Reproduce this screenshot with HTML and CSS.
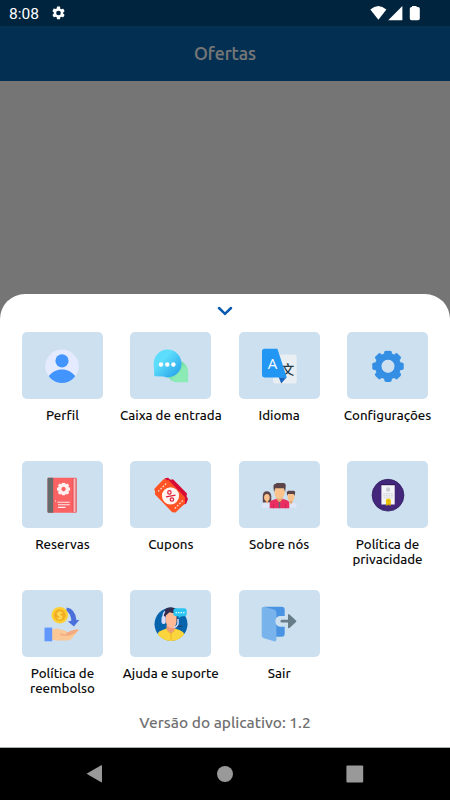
FILE: index.html
```html
<!DOCTYPE html>
<html lang="pt">
<head>
<meta charset="utf-8">
<title>Ofertas</title>
<link rel="stylesheet" href="styles.css">
</head>
<body>
<svg width="0" height="0" class="defs" aria-hidden="true">
  <defs>
    <linearGradient id="chatBlue" x1="0" y1="0" x2="1" y2="1"><stop offset="0.35" stop-color="#5cddfb"/><stop offset="1" stop-color="#1f9ae8"/></linearGradient>
    <linearGradient id="chatGreen" x1="0" y1="0" x2="1" y2="1"><stop offset="0.2" stop-color="#5fcf98"/><stop offset="0.6" stop-color="#8ceab5"/></linearGradient>
    <clipPath id="round"><circle cx="18" cy="18.2" r="16.7"/></clipPath>
    <mask id="hole" maskUnits="userSpaceOnUse" x="-16" y="-16" width="32" height="32"><rect x="-16" y="-16" width="32" height="32" fill="#fff"/><circle r="6.7" fill="#000"/></mask>
    <symbol id="gear8" viewBox="-16 -16 32 32">
      <circle r="9.9" fill="none" stroke="currentColor" stroke-width="6.4"/>
      <g fill="currentColor" mask="url(#hole)">
        <rect x="-3.8" y="-15.7" width="7.6" height="31.4" rx="1.8"/>
        <rect x="-3.8" y="-15.7" width="7.6" height="31.4" rx="1.8" transform="rotate(45)"/>
        <rect x="-3.8" y="-15.7" width="7.6" height="31.4" rx="1.8" transform="rotate(90)"/>
        <rect x="-3.8" y="-15.7" width="7.6" height="31.4" rx="1.8" transform="rotate(135)"/>
      </g>
    </symbol>
  </defs>
</svg>
<div class="screen">
  <div class="status">
    <span class="clock">8:08</span>
    <svg class="status-gear" viewBox="2 2 20 20"><path fill="#fff" d="M19.14 12.94c.04-.3.06-.61.06-.94s-.02-.64-.07-.94l2.03-1.58a.49.49 0 0 0 .12-.61l-1.92-3.32a.49.49 0 0 0-.59-.22l-2.39.96a7 7 0 0 0-1.62-.94l-.36-2.54A.48.48 0 0 0 13.92 2h-3.84a.48.48 0 0 0-.47.41l-.36 2.54c-.59.24-1.13.57-1.62.94l-2.39-.96a.48.48 0 0 0-.59.22L2.74 8.87a.48.48 0 0 0 .12.61l2.03 1.58a7 7 0 0 0 0 1.88l-2.03 1.58a.49.49 0 0 0-.12.61l1.92 3.32c.12.22.37.29.59.22l2.39-.96c.5.38 1.03.7 1.62.94l.36 2.54c.05.24.24.41.48.41h3.84c.24 0 .44-.17.47-.41l.36-2.54a7 7 0 0 0 1.62-.94l2.39.96c.22.08.47 0 .59-.22l1.92-3.32a.48.48 0 0 0-.12-.61zM12 15.6a3.6 3.6 0 1 1 0-7.2 3.6 3.6 0 0 1 0 7.2z"/></svg>
    <svg class="status-right" viewBox="0 0 50 16" fill="#fff"><path d="M.3 4.6Q8.3-2.500 16.400 4.600L8.400 14.800z"/><path d="M32.400.9v14.300H18.200z"/><path d="M42 2V1h4.600v1h1.400q1.800 0 1.800 1.800v9.600q0 1.800-1.800 1.800h-6.400q-1.800 0-1.800-1.800V3.800Q39.800 2 41.600 2z"/></svg>
  </div>
  <header class="appbar"><h1>Ofertas</h1></header>
  <div class="scrim"></div>
  <main class="sheet">
    <svg class="chevron" viewBox="0 0 16 10"><path d="M2 2l6 5.800L14 2" fill="none" stroke="#0759b0" stroke-width="2.500" stroke-linecap="round"/></svg>
    <div class="grid">
      <div class="item"><div class="tile"><svg viewBox="0 0 36 36"><circle cx="18" cy="18.200" r="16.700" fill="#e4eaff"/><g fill="#4294ff" clip-path="url(#round)"><circle cx="18" cy="12.800" r="6.600"/><path d="M4.600 28.300C8 23.700 12.500 21.400 18 21.400S28 23.700 31.300 28.300L27 36H9z"/></g></svg></div><span class="label">Perfil</span></div>

      <div class="item"><div class="tile"><svg viewBox="0 0 36 36"><path d="M24.500 12.800A10.800 10.800 0 0 1 35.200 23.700V34.300H24.500A10.700 10.700 0 0 1 24.500 12.800z" fill="url(#chatGreen)"/><path d="M1.300 28.300L.7 15.500A13.900 13.900 0 1 1 14.600 29.400Q12.500 29.400 10.500 28.500z" fill="url(#chatBlue)"/><g fill="#fff"><circle cx="8" cy="16.500" r="2.200"/><circle cx="14.300" cy="16.500" r="2.200"/><circle cx="20.400" cy="16.500" r="2.200"/></g></svg></div><span class="label">Caixa de entrada</span></div>

      <div class="item"><div class="tile"><svg viewBox="0 0 36 36"><rect x="12" y="6.500" width="23.700" height="29" rx="2.500" fill="#e9eef2"/><text class="han" x="20.200" y="25.700">文</text><path d="M17.700 29.200h8L20.200 35.500z" fill="#1565c0"/><path d="M3.400.8h13L25.800 29.500H3.400Q1 29.500 1 27.100V3.200Q1 .8 3.400.8z" fill="#2196f3"/><text class="latin" x="11.500" y="20.700">A</text></svg></div><span class="label">Idioma</span></div>

      <div class="item"><div class="tile"><svg viewBox="0 0 36 36" class="blue-gear"><use href="#gear8" x="2" y="2.200" width="32" height="32"/></svg></div><span class="label">Configurações</span></div>

      <div class="item"><div class="tile"><svg viewBox="0 0 36 36"><rect x="3.500" y=".8" width="29" height="35" rx="1" fill="#fb6264"/><path d="M4.500.8h4.700v35H4.500q-1 0-1-1V1.800q0-1 1-1z" fill="#656b6b"/><path d="M29.200 1.500h2.500v33.500h-2.500z" fill="#ffb4b4"/><path d="M29 1v34.500M32.200 1v34.500" stroke="#c9444e" stroke-width=".6"/><g class="white-gear"><use href="#gear8" x="12.800" y="5.300" width="13.500" height="13.500"/><circle cx="19.550" cy="12.050" r="2.700" fill="none" stroke="#fff0ef" stroke-width="1"/></g><path d="M13.500 25.200h12.300M14 27.800h11.800M14 30.400h7.500" stroke="#ffe9e9" stroke-width="1.100"/><path d="M11.500 23v2" stroke="#ffc0c0" stroke-width=".8"/></svg></div><span class="label">Reservas</span></div>

      <div class="item"><div class="tile"><svg viewBox="0 0 36 36"><path d="M11.500 1.300L15 .7l2.500 2L20 2.200 34 16.500l-.5 2.500L35 22l-2 5-4 .5z" fill="#d80b35"/><path d="M11 1.800l2.300 1.500 2.200-.2L32.200 20.500l-.4 2.200.5 3.500L22.500 35.400l-3.300-.2L1.800 17.300l.4-2.400-1-3z" fill="#ff5323"/><circle cx="17.500" cy="18.800" r="8.600" fill="#fff4f0"/><path d="M5.200 14.500l8-8M21.800 31.500l8.500-8.500" stroke="#ffd5c6" stroke-width="1.300" stroke-dasharray="1.700 1.500"/><g fill="none" stroke="#df203c" stroke-width="1.200"><path d="M13 19.800l9.500-1.600"/><circle cx="16.400" cy="15.400" r="1.700"/><circle cx="18.900" cy="22.500" r="1.700"/></g></svg></div><span class="label">Cupons</span></div>

      <div class="item"><div class="tile"><svg viewBox="0 0 36 36"><path d="M1.800 24.500V19q0-4.800 4-4.800t4.500 4.800v6.500H2z" fill="#5c4449"/><path d="M.8 30.700v-2q0-2 2.500-2.700l2.500-.8 3 .8 2 4.700zM25 30.700l1.500-4.500 3.700-1 3.500 1q2 .7 2 2.500v2z" fill="#dee5f6"/><path d="M5 21h2.200v4.500l-1.200 1-1-1z" fill="#e9a76e"/><ellipse cx="5.900" cy="20.500" rx="2.800" ry="3.500" fill="#fac28c"/><path d="M28.500 22h3v3.800L30 27l-1.500-1.200z" fill="#e9a76e"/><ellipse cx="30" cy="19.700" rx="3.400" ry="4.300" fill="#fac28c"/><path d="M26.300 19l-.6-4 1.500-1.200h5.600q1.400.2 1.400 1.800l-.7 3.400-1-2h-5.400z" fill="#5c4449"/><path d="M8.700 31.200v-5q0-2.300 2.500-2.900L15.500 21.700h6l4.500 1.600q2.300.7 2.300 2.900v5z" fill="#e92f62"/><path d="M15.500 19h6v3.500l-3 3-3-3z" fill="#e9a76e"/><ellipse cx="18.500" cy="15.300" rx="5.200" ry="6.700" fill="#fac28c"/><path d="M13 15l-.6-6q.4-2.300 2.400-2.300l1-.8h7q2 .2 2 2.300L24.200 15l-1.400-3.800h-8.400z" fill="#5c4449"/><path d="M18.500 25v6.200" stroke="#5b6a78" stroke-width="1.300"/><path d="M12.500 27v4.200M24.500 27v4.200" stroke="#c82052" stroke-width=".7"/></svg></div><span class="label">Sobre nós</span></div>

      <div class="item"><div class="tile"><svg viewBox="0 0 36 36"><circle cx="18" cy="18.200" r="15.900" fill="#44277b" stroke="#2b2060" stroke-width=".8"/><path d="M10.500 7.300h14.800v1.300H10.500z" fill="#281750"/><path d="M11.400 8.200h13.300v19.300H11.400z" fill="#f5f5f8"/><circle cx="18.100" cy="12.500" r="2.200" fill="#c8ccd0"/><path d="M13.300 16.800h9.600M13.300 18.800h9.600" stroke="#bfc4cc" stroke-width=".8" stroke-dasharray="2 .6"/><path d="M13.300 20.800h9.600" stroke="#d0d3da" stroke-width=".7"/><path d="M16.200 24.500h4.500v4.500l-2.200-1.300-2.300 1.300z" fill="#dfa800"/><circle cx="18.400" cy="24" r="2.600" fill="#f4c900"/><circle cx="18.400" cy="24" r="1" fill="#dca600"/></svg></div><span class="label">Política de<br>privacidade</span></div>

      <div class="item"><div class="tile"><svg viewBox="0 0 36 36"><path d="M22.800 1.500Q31.500 3 32.500 14.300l3-.5-5.600 6.700-5.900-5 3.300-.7Q27 8 22.200 4.500z" fill="#4b70dc"/><circle cx="15.800" cy="9.200" r="8.300" fill="#fdd034"/><circle cx="15.800" cy="9.200" r="5.900" fill="#f3ad22"/><text class="coin" x="15.800" y="13">$</text><path d="M8 23.500l5-1 8 2.200q2.500.4 2 2l-1 1.500 9.500-4.300q3-1 3.300.2L28 32.200Q26.500 34.500 23 34.500H13l-5-1z" fill="#fac796"/><path d="M15 27.300l6 1.300q1.600-.3 1.500-1.900l5.300-2.200 3.800-.9q2.500-.6 3.200.5l-5 4-5.300 1.700H18z" fill="#f3aa82"/><path d="M.5 21.600h7.700v13.700H.5z" fill="#6296ff"/></svg></div><span class="label">Política de<br>reembolso</span></div>

      <div class="item"><div class="tile"><svg viewBox="0 0 36 36"><circle cx="18" cy="18.200" r="16.500" fill="#0664ac"/><g clip-path="url(#round)"><path d="M5 36V27q1-2 4-2.800l5-2h7.500l6 2.300q3 1 3.800 3.500v8z" fill="#fbd53d"/><path d="M13.500 19h8.200v4.800L18 27.500l-4.500-3.700z" fill="#f09b79"/></g><path d="M10.800 17V8q0-6.700 6.700-6.700T24.200 8v8z" fill="#322d4e"/><path d="M12.800 9.500l3.700-3.200 7 1.700v7.700q-.6 6.200-5 6.200-5.700-.7-5.700-7.900z" fill="#ffb994"/><path d="M12 5.500q-2 1.500-2 6.500" fill="none" stroke="#d9ddfc" stroke-width="1.400"/><rect x="8.500" y="10" width="4.300" height="8" rx="2" fill="#d9ddfc"/><path d="M25 13v4.500q-.5 3.500-4.500 4" fill="none" stroke="#d9ddfc" stroke-width="1.500"/><path d="M24.500 20.500l4.500-.5" stroke="#30355a"/><path d="M14 24.500l4 3.300 3.900-3.600M18 28v6" fill="none" stroke="#e6aa23" stroke-width=".7"/><path d="M23 2.200h8.200q2.500 0 2.500 2.600v3q0 2.500-2.500 2.500h-2.500L25.500 12l.3-1.700H23q-2.600 0-2.600-2.500v-3q0-2.600 2.600-2.600z" fill="#2bc5f1"/><path d="M22.600 6.600h9.200" stroke="#eaffff" stroke-width="1.200" stroke-dasharray="1.400 1.100"/></svg></div><span class="label">Ajuda e suporte</span></div>

      <div class="item"><div class="tile"><svg viewBox="0 0 36 36"><path d="M3.500.8h17q3.200 0 3.200 3V10h-4.200a5.200 5.200 0 0 0 0 10.400h4.200v7.400q0 3-3 3H10z" fill="#4993e3"/><path d="M.7 3Q.7.8 3.500.8L13 3.600q2.400.8 2.400 3.200v26.700q0 2.400-2.400 1.800L3 32.300Q.7 31.600.7 29.300z" fill="#78b3eb"/><path d="M19.500 10H25v10.400h-5.500a5.200 5.200 0 0 1 0-10.400z" fill="#cde0ef"/><path d="M20.900 15.200H28" stroke="#667d88" stroke-width="2.700" stroke-linecap="round"/><path d="M27 9.200q0-1.800 1.500-.7l6.500 6q.8.700 0 1.400l-6.500 6q-1.500 1.100-1.500-.7z" fill="#667d88"/></svg></div><span class="label">Sair</span></div>
    </div>
    <p class="version">Versão do aplicativo: 1.2</p>
  </main>
  <nav class="navbar">
    <svg viewBox="0 0 18 18"><path d="M.5 8.700L15.200.3q.8-.3.800.5v16q0 .8-.8.500z"/></svg>
    <svg viewBox="0 0 18 18"><circle cx="9" cy="9" r="8"/></svg>
    <svg viewBox="0 0 18 18"><rect x=".4" y=".6" width="16.800" height="16.800" rx="1"/></svg>
  </nav>
</div>
</body>
</html>
```
FILE: styles.css
```css
* { box-sizing: border-box; }
body { margin: 0; font-family: Ubuntu, "Noto Sans", sans-serif; background: #757575; }
.defs { display: block; }
.screen { width: 450px; height: 800px; display: flex; flex-direction: column; background: #757575; overflow: hidden; }

.status { height: 26px; flex: none; display: flex; align-items: center; padding: 0 30px 0 9px; background: #00243e; color: #fff; }
.clock { font: 400 15.5px/26px Roboto, sans-serif; width: 43px; padding-top: 2px; }
.status-gear { width: 13px; height: 14px; }
.status-right { width: 50px; height: 16px; margin-left: auto; }

.appbar { height: 55px; flex: none; display: flex; align-items: center; justify-content: center; background: #033052; }
.appbar h1 { margin: 0; font-size: 17.7px; line-height: 24px; font-weight: 500; color: #787878; -webkit-text-stroke: 0.2px #787878; }

.scrim { height: 213px; flex: none; }
.sheet { height: 454px; flex: none; background: #fff; border-radius: 25px 25px 0 0; border-bottom: 1px solid #a8b0ac; display: flex; flex-direction: column; align-items: center; padding-top: 12px; }
.chevron { width: 16px; height: 10px; flex: none; margin-bottom: 16px; }
.grid { width: 433.5px; flex: none; display: grid; grid-template-columns: repeat(4, 1fr); grid-template-rows: 129px 129px 113px; }
.item { display: flex; flex-direction: column; align-items: center; }
.tile { width: 81px; height: 67px; border-radius: 5px; background: #cde0ef; display: flex; align-items: center; justify-content: center; flex: none; }
.tile svg { width: 36px; height: 36px; display: block; }
.label { margin-top: 9px; font-size: 13.3px; line-height: 15px; font-weight: 500; color: #0c0c0c; text-align: center; white-space: nowrap; }

.blue-gear { color: #348fe4; }
.white-gear { color: #fff0ef; }
.latin { font: 500 15px "Open Sans", sans-serif; fill: #fff; text-anchor: middle; }
.han { font: 500 13px "Noto Sans CJK SC", sans-serif; fill: #263b49; }
.coin { font: 700 10.5px "Noto Sans", sans-serif; fill: #ffe05c; text-anchor: middle; }

.version { margin: 9px 0 0; font-size: 15.5px; line-height: 22px; font-weight: 500; color: #707070; white-space: nowrap; }

.navbar { height: 52px; flex: none; background: #000; display: flex; justify-content: space-between; align-items: center; padding: 0 86px; }
.navbar svg { width: 18px; height: 18px; fill: #999; }
```
